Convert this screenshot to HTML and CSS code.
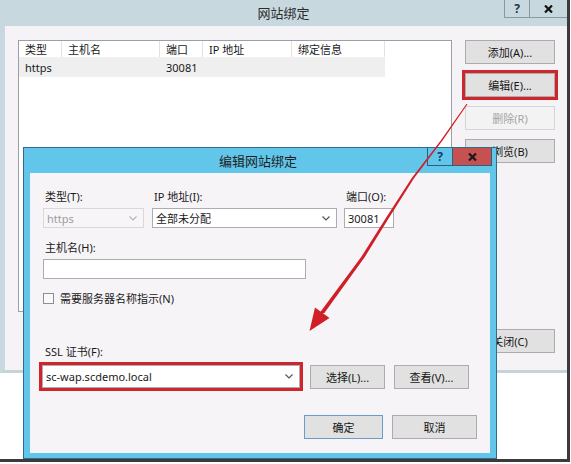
FILE: index.html
```html
<!DOCTYPE html>
<html lang="zh-CN">
<head>
<meta charset="utf-8">
<title>网站绑定</title>
<link rel="stylesheet" href="styles.css">
</head>
<body>
<div class="screen">
  <div class="win">
    <div class="win-title">
      <span class="win-title-text">网站绑定</span>
      <div class="win-ctrls">
        <span class="ctrl ctrl-help">?</span>
        <span class="ctrl ctrl-close"><svg width="9" height="8" viewBox="0 0 9 8"><path d="M1 0.5 L8 7.5 M8 0.5 L1 7.5" stroke="#111" stroke-width="2.2"/></svg></span>
      </div>
    </div>
    <div class="win-body">
      <div class="list">
        <div class="list-head">
          <span class="cell">类型</span><span class="cell">主机名</span><span class="cell">端口</span><span class="cell">IP 地址</span><span class="cell">绑定信息</span>
        </div>
        <div class="list-row">
          <span class="cell">https</span><span class="cell"></span><span class="cell">30081</span><span class="cell"></span><span class="cell"></span>
        </div>
      </div>
      <div class="side">
        <button class="btn">添加(A)...</button>
        <button class="btn btn-marked">编辑(E)...</button>
        <button class="btn btn-disabled">删除(R)</button>
        <button class="btn">浏览(B)</button>
        <button class="btn btn-close">关闭(C)</button>
      </div>
    </div>
    <div class="win-foot"></div>
  </div>

  <div class="dlg">
    <div class="dlg-title">
      <span class="dlg-title-text">编辑网站绑定</span>
      <div class="dlg-ctrls">
        <span class="dctrl dctrl-help">?</span>
        <span class="dctrl dctrl-close"><svg width="9" height="8" viewBox="0 0 9 8"><path d="M1 0.5 L8 7.5 M8 0.5 L1 7.5" stroke="#1a1a1a" stroke-width="2.2"/></svg></span>
      </div>
    </div>
    <div class="dlg-frame">
      <div class="dlg-body">
        <div class="row1">
          <div class="grp grp-type">
            <span class="lbl">类型(T):</span>
            <div class="field field-disabled"><span>https</span><svg class="chev" width="8" height="5" viewBox="0 0 8 5"><polyline points="0.5,0.5 4,4 7.5,0.5" fill="none" stroke="#b5b5b5" stroke-width="1.2"/></svg></div>
          </div>
          <div class="grp grp-ip">
            <span class="lbl">IP 地址(I):</span>
            <div class="field"><span>全部未分配</span><svg class="chev" width="8" height="5" viewBox="0 0 8 5"><polyline points="0.5,0.5 4,4 7.5,0.5" fill="none" stroke="#555" stroke-width="1.2"/></svg></div>
          </div>
          <div class="grp grp-port">
            <span class="lbl">端口(O):</span>
            <div class="field"><span>30081</span></div>
          </div>
        </div>
        <div class="grp grp-host">
          <span class="lbl">主机名(H):</span>
          <div class="field field-host"></div>
        </div>
        <div class="chk-row">
          <span class="chk"></span>
          <span class="chk-lbl">需要服务器名称指示(N)</span>
        </div>
        <span class="lbl lbl-ssl">SSL 证书(F):</span>
        <div class="ssl-row">
          <div class="field field-ssl"><span>sc-wap.scdemo.local</span><svg class="chev" width="8" height="5" viewBox="0 0 8 5"><polyline points="0.5,0.5 4,4 7.5,0.5" fill="none" stroke="#555" stroke-width="1.2"/></svg></div>
          <button class="btn btn-sel">选择(L)...</button>
          <button class="btn btn-view">查看(V)...</button>
        </div>
        <div class="ok-row">
          <button class="btn btn-ok">确定</button>
          <button class="btn btn-cancel">取消</button>
        </div>
      </div>
    </div>
  </div>

  <svg class="arrow" width="571" height="464" viewBox="0 0 571 464">
    <polygon fill="#d01f27" points="466.4,104 441.1,140 411.8,178 386.5,217 361.2,257 319.6,313 324.4,313 364.8,257 389.5,217 414.2,178 442.9,140 467.6,104"/>
    <polygon fill="#d01f27" points="309.5,331 315,307.5 329.5,318"/>
  </svg>
</div>
</body>
</html>
```

FILE: styles.css
```css
* { box-sizing: border-box; }

html, body {
  margin: 0;
  padding: 0;
  background: #ffffff;
}

body {
  font-family: "Segoe UI", "Noto Sans", "Noto Sans CJK SC", sans-serif;
  font-size: 11px;
  color: #1a1a1a;
}

.screen {
  position: relative;
  width: 571px;
  height: 464px;
  overflow: hidden;
  background: #ffffff;
}

/* ---------- outer window ---------- */
.win {
  width: 570px;
  height: 462px;
  border-right: 3px solid #3b3b3b;
  border-bottom: 3px solid #3b3b3b;
  display: flex;
  flex-direction: column;
}

.win-title {
  height: 26px;
  flex: none;
  background: #c8d8df;
  display: grid;
  grid-template-columns: 1fr auto 1fr;
  align-items: start;
}

.win-title-text {
  grid-column: 2;
  line-height: 27px;
  font-size: 13px;
  color: #2b2b2b;
}

.win-ctrls {
  grid-column: 3;
  justify-self: end;
  display: flex;
}

.ctrl {
  height: 18px;
  display: flex;
  align-items: center;
  justify-content: center;
  border-left: 1px solid #8a989f;
  border-bottom: 1px solid #8a989f;
  font-weight: bold;
  font-size: 12px;
  color: #1d3550;
}

.ctrl-help { width: 25px; }
.ctrl-close { width: 38px; }

.win-body {
  height: 347px;
  flex: none;
  display: flex;
  background: #f6f3f6;
  border-left: 5px solid #c8d8df;
  border-bottom: 3px solid #c6d3d9;
  padding: 14px 12px 17px 13px;
}

.list {
  width: 434px;
  height: 272px;
  flex: none;
  border: 1px solid #9ca0a6;
  background: #ffffff;
}

.list-head,
.list-row {
  display: grid;
  grid-template-columns: 43px 98px 43px 89px 93px;
  width: 366px;
}

.list-head {
  height: 17px;
  line-height: 17px;
  border-bottom: 1px solid #f0f0f0;
}

.list-head .cell {
  border-right: 1px solid #e2e2e2;
}

.list-row {
  height: 19px;
  line-height: 19px;
  background: #efefef;
}

.cell {
  padding-left: 6px;
  white-space: nowrap;
  overflow: hidden;
}

.side {
  margin-left: 13px;
  width: 90px;
  display: flex;
  flex-direction: column;
  gap: 9px;
}

.btn {
  height: 24px;
  padding: 0;
  border: 1px solid #acacac;
  background: #e1e1e1;
  font-family: inherit;
  font-size: 11px;
  color: #151515;
  display: flex;
  align-items: center;
  justify-content: center;
  flex: none;
}

.side .btn { width: 90px; }

.btn-marked {
  outline: 3px solid #cf252c;
  outline-offset: 0;
}

.btn-disabled {
  color: #a5a5a5;
  border-color: #d6d6d6;
  background: #f3f3f3;
}

.btn-close { margin-top: auto; }

.win-foot {
  flex: 1;
  background: #ffffff;
}

/* ---------- edit dialog (overlay) ---------- */
.dlg {
  position: absolute;
  left: 23px;
  top: 147px;
  width: 474px;
  height: 312px;
  border: 1px solid #356a8a;
  background: #62c6ea;
  display: flex;
  flex-direction: column;
}

.dlg-title {
  height: 25px;
  flex: none;
  display: grid;
  grid-template-columns: 1fr auto 1fr;
  align-items: start;
  padding-right: 4px;
}

.dlg-title-text {
  grid-column: 2;
  line-height: 26px;
  font-size: 13px;
  color: #1e1e1e;
}

.dlg-ctrls {
  grid-column: 3;
  justify-self: end;
  display: flex;
}

.dctrl {
  height: 18px;
  display: flex;
  align-items: center;
  justify-content: center;
  border: 1px solid #2d5f7e;
  border-top: none;
  font-weight: bold;
  font-size: 12px;
  color: #183c5c;
}

.dctrl-help { width: 25px; border-right: none; }
.dctrl-close { width: 40px; background: #c75050; }

.dlg-frame {
  flex: 1;
  display: flex;
  padding: 0 6px 5px 6px;
}

.dlg-body {
  flex: 1;
  background: #f7f4f8;
  padding: 17px 13px 0 13px;
  display: flex;
  flex-direction: column;
}

.row1 {
  display: flex;
}

.grp {
  display: flex;
  flex-direction: column;
}

.grp-type { width: 101px; }
.grp-ip { width: 185px; margin-left: 8px; }
.grp-port { width: 50px; margin-left: 7px; }

.lbl {
  display: block;
  padding-left: 2px;
  line-height: 14px;
  margin-bottom: 4px;
  white-space: nowrap;
}

.field {
  height: 20px;
  border: 1px solid #abadb3;
  background: #ffffff;
  display: flex;
  align-items: center;
  justify-content: space-between;
  padding: 0 6px 0 3px;
  white-space: nowrap;
}

.field-disabled {
  border-color: #d9d9d9;
  background: #f7f5f7;
  color: #9d9d9d;
}

.grp-host { margin-top: 13px; }

.field-host { width: 263px; }

.chk-row {
  margin-top: 14px;
  height: 11px;
  display: flex;
  align-items: center;
}

.chk {
  width: 11px;
  height: 11px;
  border: 1px solid #8e8e8e;
  background: #f9f9f9;
  flex: none;
}

.chk-lbl {
  margin-left: 6px;
  line-height: 11px;
}

.lbl-ssl {
  margin-top: 41px;
  margin-bottom: 6px;
}

.ssl-row {
  display: flex;
  align-items: flex-start;
}

.field-ssl {
  width: 258px;
  height: 23px;
  margin-left: -1px;
  outline: 3px solid #cf252c;
  padding-left: 3px;
}

.btn-sel { width: 75px; margin-left: 10px; }
.btn-view { width: 75px; margin-left: 9px; }

.ok-row {
  margin-top: 26px;
  display: flex;
  justify-content: flex-end;
  gap: 9px;
}

.btn-ok {
  width: 79px;
  border-color: #6b9bc6;
}

.btn-cancel { width: 85px; }

/* ---------- annotation arrow (overlay) ---------- */
.arrow {
  position: absolute;
  left: 0;
  top: 0;
  pointer-events: none;
}
```
